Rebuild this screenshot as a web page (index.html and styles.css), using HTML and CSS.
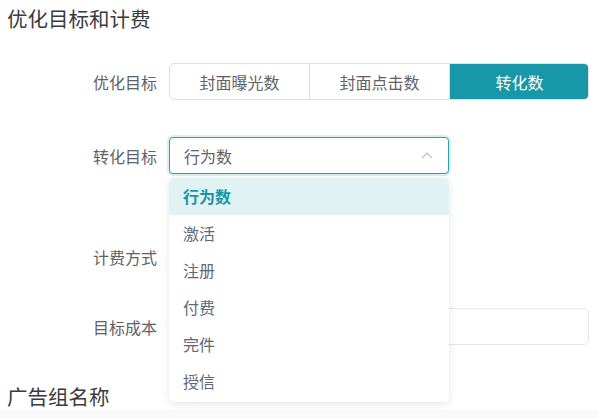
FILE: index.html
```html
<!DOCTYPE html>
<html lang="zh-CN">
<head>
<meta charset="utf-8">
<link rel="stylesheet" href="styles.css">
</head>
<body>
<div class="page">
  <h2 class="section-title">优化目标和计费</h2>

  <div class="form-row row-1">
    <div class="label">优化目标</div>
    <div class="segmented">
      <div class="seg">封面曝光数</div>
      <div class="seg">封面点击数</div>
      <div class="seg active">转化数</div>
    </div>
  </div>

  <div class="form-row row-2">
    <div class="label">转化目标</div>
    <div class="select-wrap">
      <div class="select focused">
        <span class="select-value">行为数</span>
        <svg class="chevron" width="12" height="7" viewBox="0 0 12 7"><path d="M1 6 L6 1.2 L11 6" fill="none" stroke="#c0c4cc" stroke-width="1.3"/></svg>
      </div>
      <ul class="dropdown">
        <li class="opt selected">行为数</li>
        <li class="opt">激活</li>
        <li class="opt">注册</li>
        <li class="opt">付费</li>
        <li class="opt">完件</li>
        <li class="opt">授信</li>
      </ul>
    </div>
  </div>

  <div class="form-row row-3">
    <div class="label">计费方式</div>
    <div class="control"></div>
  </div>

  <div class="form-row row-4">
    <div class="label">目标成本</div>
    <div class="input"></div>
  </div>

  <h2 class="section-title second">广告组名称</h2>
</div>
<div class="footer-band"></div>
</body>
</html>
```

FILE: styles.css
```css
* { box-sizing: border-box; }
html, body { margin: 0; padding: 0; background: #fff; }
body {
  width: 598px;
  height: 418px;
  overflow: hidden;
  font-family: "Noto Sans CJK SC", "Noto Sans", sans-serif;
  color: #606266;
}
.page { padding: 0 9px 0 7px; }
.section-title {
  margin: 0;
  font-size: 20.5px;
  font-weight: 400;
  line-height: 36px;
  height: 36px;
  color: #3a3b3d;
}
.section-title.second { margin-top: 33px; }
.form-row {
  display: flex;
  align-items: center;
  height: 37px;
}
.row-1 { margin-top: 27px; }
.row-2 { margin-top: 37px; position: relative; z-index: 2; }
.row-3 { margin-top: 64px; }
.row-4 { margin-top: 33px; }
.label {
  width: 162px;
  flex: none;
  text-align: right;
  padding-right: 12px;
  font-size: 16px;
  color: #606266;
}
.segmented {
  display: flex;
  width: 420px;
  height: 37px;
  border: 1px solid #dcdfe6;
  border-radius: 5px;
  overflow: hidden;
}
.seg {
  flex: 1;
  display: flex;
  align-items: center;
  justify-content: center;
  font-size: 16px;
  color: #606266;
  border-right: 1px solid #dcdfe6;
}
.seg:last-child { border-right: none; }
.seg.active {
  background: #1897a8;
  color: #fff;
  margin: -1px -1px -1px 0;
}
.select-wrap { position: relative; width: 280px; height: 37px; }
.select {
  display: flex;
  align-items: center;
  justify-content: space-between;
  height: 37px;
  padding: 0 14px 0 14px;
  border: 1px solid #dcdfe6;
  border-radius: 4px;
  background: #fff;
}
.select.focused {
  border-color: #2aa3b3;
  box-shadow: 0 0 0 2px rgba(42, 163, 179, 0.18);
}
.select-value { font-size: 16px; color: #606266; }
.chevron { margin-right: 1px; }
.dropdown {
  position: absolute;
  top: 41px;
  left: 0;
  width: 280px;
  margin: 0;
  padding: 0 0 2px 0;
  list-style: none;
  background: #fff;
  border-radius: 5px;
  box-shadow: 0 2px 10px rgba(0, 0, 0, 0.1);
  overflow: hidden;
}
.opt {
  height: 37px;
  line-height: 37px;
  padding-left: 14px;
  font-size: 16px;
  color: #5f6878;
}
.opt.selected {
  background: #e0f2f4;
  color: #1897a8;
  font-weight: 700;
}
.control { flex: 1; height: 37px; }
.input {
  width: 420px;
  height: 37px;
  border: 1px solid #e4e7ed;
  border-radius: 5px;
}
.footer-band {
  position: absolute;
  left: 0;
  top: 410px;
  width: 598px;
  height: 8px;
  background: #f9f9fa;
  z-index: 0;
}
```
